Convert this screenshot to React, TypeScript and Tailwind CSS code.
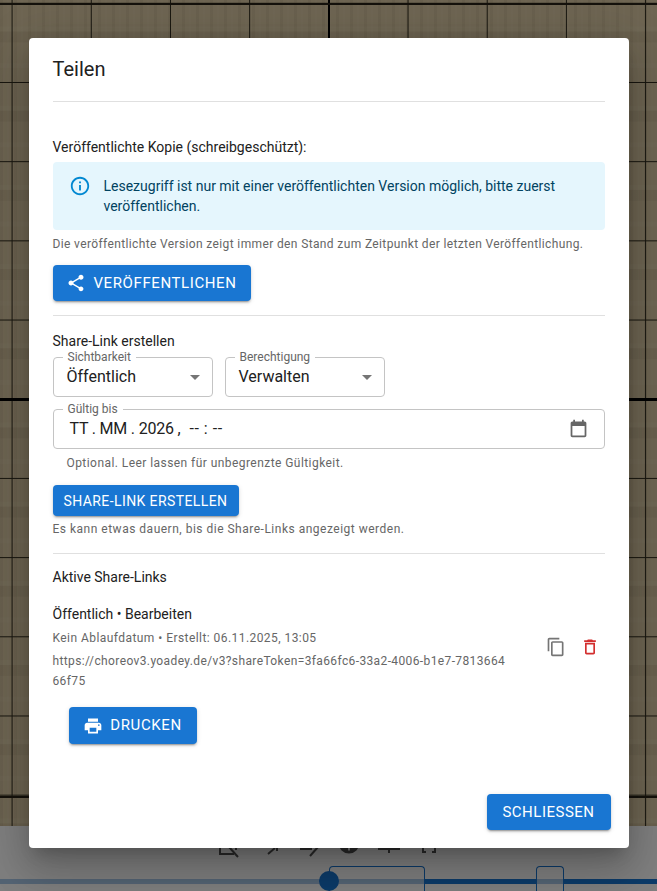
import { ReactNode } from 'react';

function Divider() {
  return <div className="h-px bg-[#e0e0e0]" />;
}

function Button({ children, className = '' }: { children: ReactNode; className?: string }) {
  return (
    <button className={`flex items-center justify-center rounded bg-[#1976d2] text-white font-normal uppercase shadow-[0_3px_1px_-2px_rgba(0,0,0,0.2),0_2px_2px_0_rgba(0,0,0,0.14),0_1px_5px_0_rgba(0,0,0,0.12)] ${className}`}>
      {children}
    </button>
  );
}

function SelectBox({ label, value }: { label: string; value: string }) {
  return (
    <div className="relative flex h-10 w-40 items-center justify-between rounded border border-[#c4c4c4] pl-[13px] pr-[5px]">
      <span className="absolute -top-[8px] left-[9px] bg-white px-[5px] text-xs leading-[14px] text-[#666]">{label}</span>
      <span className="text-base text-[#212121]">{value}</span>
      <svg width="24" height="24" viewBox="0 0 24 24" className="fill-[#757575]">
        <path d="M7 10l5 5 5-5z" />
      </svg>
    </div>
  );
}

// only the lower edge of these shows below the dialog
function Toolbar() {
  return (
    <div className="flex gap-4 pl-[217px] pt-[8px]">
      <svg width="24" height="24" viewBox="0 0 24 24" fill="none" stroke="#555" strokeWidth="2">
        <path d="M3 4v16h14M3 3l18 20M19 8v8" />
      </svg>
      <svg width="24" height="24" viewBox="0 0 24 24" fill="none" stroke="#555" strokeWidth="2">
        <path d="M20 4v13M11 20l7-6" />
      </svg>
      <svg width="24" height="24" viewBox="0 0 24 24" fill="none" stroke="#555" strokeWidth="2">
        <path d="M3 15h12M13 22l8-9" />
      </svg>
      <svg width="24" height="24" viewBox="0 0 24 24" className="fill-[#555]">
        <path d="M12-1.5a10.5 10.5 0 1 0 0 21 10.5 10.5 0 0 0 0-21zm-1 18v-6h2v6z" />
      </svg>
      <svg width="24" height="24" viewBox="0 0 24 24" fill="none" stroke="#555" strokeWidth="2">
        <path d="M1 15h10M13 15h10M12 8v11" />
      </svg>
      <svg width="24" height="24" viewBox="0 0 24 24" fill="none" stroke="#555" strokeWidth="2">
        <path d="M6 12v6h3M18 12v6h-3" />
      </svg>
    </div>
  );
}

export default function App() {
  return (
    <div className="relative h-[891px] w-[657px] overflow-hidden font-['Roboto',sans-serif]">
      {/* page behind the dialog */}
      <div className="flex h-full flex-col">
        <div className="h-[826px] bg-[#dccaa4] bg-[linear-gradient(180deg,#000_0_3px,transparent_3px),linear-gradient(180deg,#2a2518_0_2px,transparent_2px),linear-gradient(90deg,#000_0_2px,transparent_2px),linear-gradient(90deg,#2e2a1c_0_1px,transparent_1px),linear-gradient(180deg,#2e2a1c_0_1px,transparent_1px),linear-gradient(180deg,transparent_0_30%,rgba(255,245,215,0.09)_30%_36%,rgba(70,55,30,0.06)_36%_50%,transparent_50%_76%,rgba(255,245,215,0.08)_76%_82%,transparent_82%),repeating-linear-gradient(90deg,rgba(70,55,30,0.06)_0_3px,transparent_3px_7px,rgba(255,245,215,0.07)_7px_9px,transparent_9px_14px)] bg-[length:100%_1000px,100%_793px,396px_100%,79.2px_100%,100%_79.2px,79.2px_79.2px,auto] bg-[position:0_398px,0_3px,328px_0,11.6px_0,0_2.8px,11.6px_2.8px,0_0]" />
        <div className="relative flex-1 bg-white">
          <Toolbar />
          <div className="absolute left-0 top-[53px] flex h-[5px] w-full">
            <div className="w-[425px] bg-[#a9c9e8]" />
            <div className="w-[111px] bg-[#1976d2]" />
            <div className="w-[28px] bg-[#a9c9e8]" />
            <div className="flex-1 bg-[#1976d2]" />
          </div>
          <div className="absolute left-[329px] top-[40px] h-8 w-24 rounded-t border border-b-0 border-[#1976d2]" />
          <div className="absolute left-[536px] top-[40px] h-8 w-7 rounded-t border border-b-0 border-[#1976d2]" />
          <div className="absolute left-[319px] top-[45px] h-5 w-5 rounded-full bg-[#1976d2]" />
        </div>
      </div>

      <div className="absolute inset-0 flex justify-center bg-black/50 pt-[38px]">
        <div className="h-[810px] w-[600px] rounded bg-white shadow-[0_11px_15px_-7px_rgba(0,0,0,0.2),0_24px_38px_3px_rgba(0,0,0,0.14),0_9px_46px_8px_rgba(0,0,0,0.12)]">
          <h2 className="px-6 pt-[15px] pb-[16px] text-xl leading-[32px] text-[#212121]">Teilen</h2>
          <div className="mx-6"><Divider /></div>

          <div className="px-6 pt-[35px]">
            <p className="text-sm leading-5 text-[#212121]">Veröffentlichte Kopie (schreibgeschützt):</p>
            <div className="mt-[5px] flex h-[68px] rounded bg-[#e5f6fd] px-4 pt-[14px] text-[#014361]">
              <svg width="22" height="22" viewBox="0 0 24 24" className="mr-[13px] mt-[-1px] shrink-0 fill-[#0288d1]">
                <path d="M11 7h2v2h-2zm0 4h2v6h-2zm1-9C6.48 2 2 6.48 2 12s4.48 10 10 10 10-4.48 10-10S17.52 2 12 2zm0 18c-4.41 0-8-3.59-8-8s3.59-8 8-8 8 3.59 8 8-3.59 8-8 8z" />
              </svg>
              <p className="text-sm leading-5">Lesezugriff ist nur mit einer veröffentlichten Version möglich, bitte zuerst veröffentlichen.</p>
            </div>
            <p className="mt-[4px] text-xs leading-5 tracking-[0.37px] text-[#666]">Die veröffentlichte Version zeigt immer den Stand zum Zeitpunkt der letzten Veröffentlichung.</p>
            <Button className="mt-[11px] h-9 w-[198px] gap-[7px] text-[15px] tracking-[0.6px]">
              <svg width="20" height="20" viewBox="0 0 24 24" className="fill-white">
                <path d="M18 16.08c-.76 0-1.44.3-1.96.77L8.91 12.7c.05-.23.09-.46.09-.7s-.04-.47-.09-.7l7.05-4.11c.54.5 1.25.81 2.04.81 1.66 0 3-1.34 3-3s-1.34-3-3-3-3 1.34-3 3c0 .24.04.47.09.7L8.04 9.81C7.5 9.31 6.79 9 6 9c-1.66 0-3 1.34-3 3s1.34 3 3 3c.79 0 1.5-.31 2.04-.81l7.12 4.16c-.05.21-.08.43-.08.65 0 1.61 1.31 2.92 2.92 2.92s2.92-1.31 2.92-2.92-1.31-2.92-2.92-2.92z" />
              </svg>
              Veröffentlichen
            </Button>
            <div className="mt-[14px]"><Divider /></div>

            <p className="mt-[15px] text-sm leading-5 text-[#212121]">Share-Link erstellen</p>
            <div className="mt-[6px] flex gap-3">
              <SelectBox label="Sichtbarkeit" value="Öffentlich" />
              <SelectBox label="Berechtigung" value="Verwalten" />
            </div>
            <div className="relative mt-3 flex h-10 items-center justify-between rounded border border-[#c4c4c4] pl-[16px] pr-[15px]">
              <span className="absolute -top-[8px] left-[9px] bg-white px-[5px] text-xs leading-[14px] text-[#666]">Gültig bis</span>
              <span className="text-base tracking-[-0.2px] text-[#212121]">TT . MM . 2026 ,<span className="ml-[9px] tracking-[0.5px]">-- : --</span></span>
              <svg width="21" height="21" viewBox="0 0 24 24" className="mb-[1px] fill-[#666]">
                <path d="M19 4h-1V2h-2v2H8V2H6v2H5c-1.11 0-2 .9-2 2v14c0 1.1.89 2 2 2h14c1.1 0 2-.9 2-2V6c0-1.1-.9-2-2-2zm0 16H5V9h14v11z" />
              </svg>
            </div>
            <p className="mt-[4px] pl-[14px] text-xs leading-5 tracking-[0.44px] text-[#666]">Optional. Leer lassen für unbegrenzte Gültigkeit.</p>
            <Button className="mt-[12px] h-[31px] w-[186px] text-sm tracking-[0.4px]">Share-Link erstellen</Button>
            <p className="mt-[3px] text-xs leading-5 tracking-[0.5px] text-[#666]">Es kann etwas dauern, bis die Share-Links angezeigt werden.</p>
            <div className="mt-[14px]"><Divider /></div>

            <p className="mt-[13px] text-sm leading-5 text-[#212121]">Aktive Share-Links</p>
            <div className="mt-[17px] flex">
              <div className="w-[455px]">
                <p className="text-sm leading-5 text-[#212121]">Öffentlich • Bearbeiten</p>
                <p className="mt-[4px] text-xs leading-5 tracking-[0.44px] text-[#666]">Kein Ablaufdatum • Erstellt: 06.11.2025, 13:05</p>
                <p className="mt-[3px] break-all text-xs leading-5 tracking-[0.38px] text-[#666]">https://choreov3.yoadey.de/v3?shareToken=3fa66fc6-33a2-4006-b1e7-781366466f75</p>
              </div>
              <div className="ml-[38px] mt-[23px] flex gap-[14px]">
                <svg width="20" height="20" viewBox="0 0 24 24" className="mt-[10px] fill-[#757575]">
                  <path d="M16 1H4c-1.1 0-2 .9-2 2v14h2V3h12V1zm3 4H8c-1.1 0-2 .9-2 2v14c0 1.1.9 2 2 2h11c1.1 0 2-.9 2-2V7c0-1.1-.9-2-2-2zm0 16H8V7h11v14z" />
                </svg>
                <svg width="20" height="20" viewBox="0 0 24 24" className="mt-[10px] fill-[#d32f2f]">
                  <path d="M6 19c0 1.1.9 2 2 2h8c1.1 0 2-.9 2-2V7H6v12zM8 9h8v10H8V9zm7.5-5l-1-1h-5l-1 1H5v2h14V4z" />
                </svg>
              </div>
            </div>
            <Button className="ml-4 mt-[16px] h-[37px] w-[128px] gap-[7px] text-[15px] tracking-[0.6px]">
              <svg width="20" height="20" viewBox="0 0 24 24" className="fill-white">
                <path d="M19 8H5c-1.66 0-3 1.34-3 3v6h4v4h12v-4h4v-6c0-1.66-1.34-3-3-3zm-3 11H8v-5h8v5zm3-7c-.55 0-1-.45-1-1s.45-1 1-1 1 .45 1 1-.45 1-1 1zm-1-9H6v4h12V3z" />
              </svg>
              Drucken
            </Button>
            <div className="mt-[50px] flex justify-end">
              <Button className="-mr-[6px] h-9 w-[124px] text-[15px] tracking-[0.5px]">Schliessen</Button>
            </div>
          </div>
        </div>
      </div>
    </div>
  );
}
